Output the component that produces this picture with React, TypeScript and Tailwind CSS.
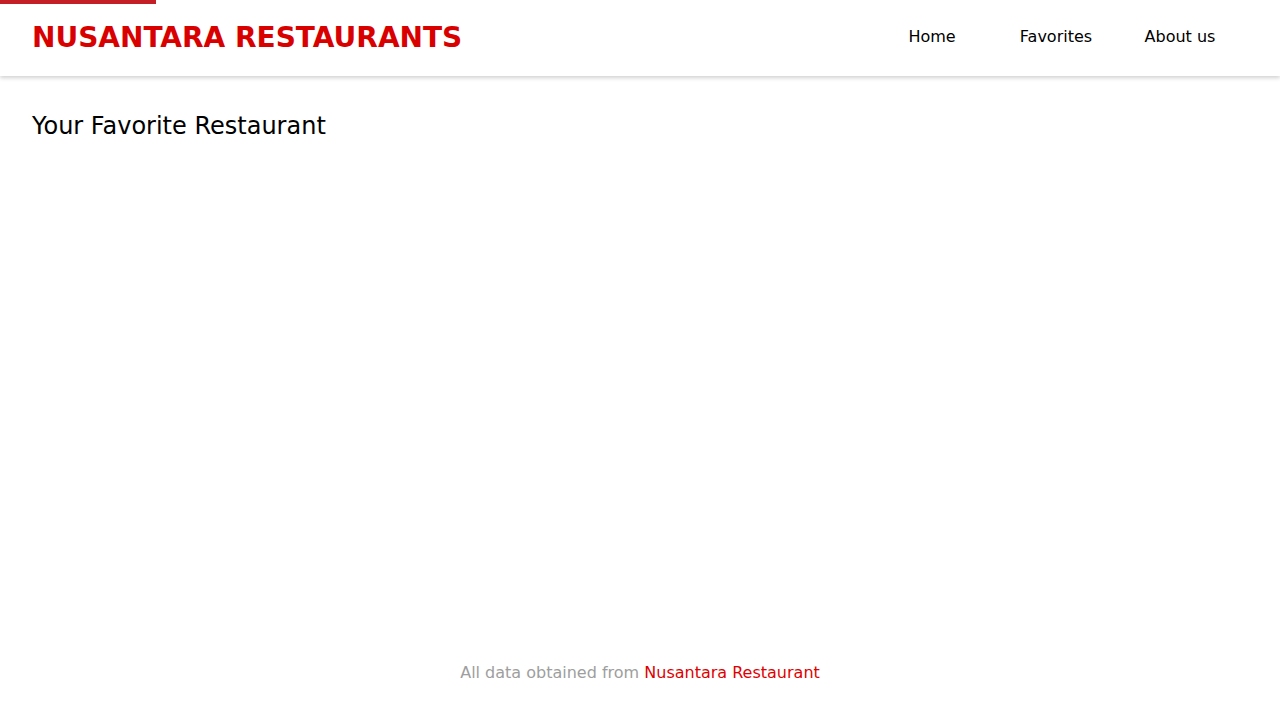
const FONT = "font-['DejaVu_Sans',sans-serif]";

const NAV = ["Home", "Favorites", "About us"];

export default function App() {
  return (
    <div className={`${FONT} flex min-h-[720px] flex-col bg-white`}>
      <header className="relative z-10 h-[76px] bg-white shadow-[0_2px_4px_rgba(0,0,0,0.18)]">
        <div className="h-[4px] w-[156px] bg-[#c41e27]" />
        <div className="flex h-[66px] items-center justify-between pl-8 pr-[38px]">
          <h1 className="mt-[2px] text-[28px] font-bold leading-none text-[#d90000]">
            NUSANTARA RESTAURANTS
          </h1>
          <nav>
            <ul className="flex">
              {NAV.map((item) => (
                <li key={item} className="w-[124px] text-center">
                  <a href="#" className="text-base text-black">
                    {item}
                  </a>
                </li>
              ))}
            </ul>
          </nav>
        </div>
      </header>

      <main className="flex-1 px-8 pt-[34px]">
        <h2 className="text-2xl font-normal text-black">Your Favorite Restaurant</h2>
      </main>

      <footer className="pb-[35px] text-center text-base text-[#9e9e9e]">
        All data obtained from{" "}
        <a href="#" className="text-[#e00000]">
          Nusantara Restaurant
        </a>
      </footer>
    </div>
  );
}
